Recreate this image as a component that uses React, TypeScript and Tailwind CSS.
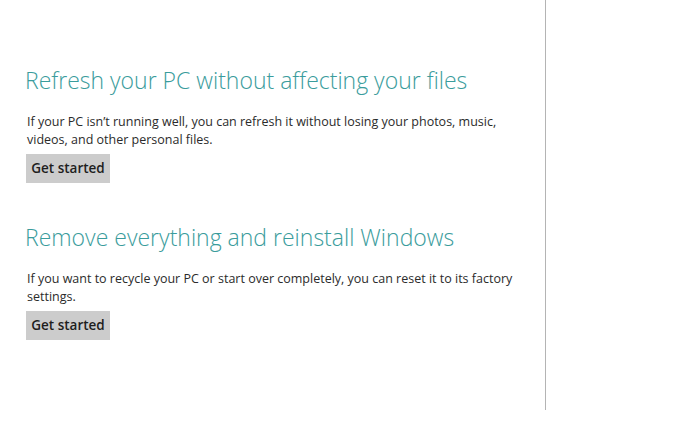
export default function App() {
  const sections = [
    {
      title: "Refresh your PC without affecting your files",
      lines: [
        "If your PC isn\u2019t running well, you can refresh it without losing your photos, music,",
        "videos, and other personal files.",
      ],
    },
    {
      title: "Remove everything and reinstall Windows",
      lines: [
        "If you want to recycle your PC or start over completely, you can reset it to its factory",
        "settings.",
      ],
    },
  ];

  return (
    <div className="h-[438px] w-[700px] bg-white font-['Open_Sans',sans-serif]">
      <div className="h-[410px] w-[546px] border-r border-[#b4b4b4] pl-[25px] pt-[64px]">
        {sections.map((s) => (
          <div key={s.title} className="mb-[38px]">
            <h1 className="text-[23px] font-light leading-[32px] text-[#3a9c9c] whitespace-nowrap">
              {s.title}
            </h1>
            <p className="mt-[17px] pl-[2px] text-[12.5px] leading-[18px] text-[#2b2b2b] whitespace-nowrap">
              {s.lines.map((l) => (
                <span key={l} className="block">
                  {l}
                </span>
              ))}
            </p>
            <button className="ml-[1px] mt-[5px] h-[29px] w-[84px] bg-[#cccccc] text-[13.5px] font-semibold text-[#1e1e1e]">
              Get started
            </button>
          </div>
        ))}
      </div>
    </div>
  );
}
